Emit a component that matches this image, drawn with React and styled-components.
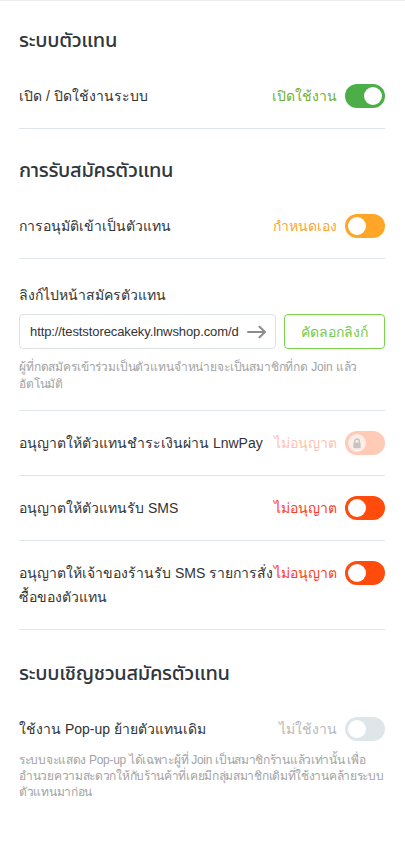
import React, { useState } from 'react';
import styled, { createGlobalStyle } from 'styled-components';

const Global = createGlobalStyle`
  html, body { margin: 0; padding: 0; background: #fff; }
  body {
    font-family: "Liberation Sans", "Noto Sans", Tahoma, sans-serif;
    color: #333;
  }
  * { box-sizing: border-box; }
`

const Page = styled.div`
  border-top: 1px solid #e8ecee;
  padding: 0 20px 40px 19px;
  width: 405px;
`

const Section = styled.section`
  padding-top: ${p => p.$pt || '28px'};
`

const Heading = styled.h2`
  margin: 0 0 9px;
  font-family: "Noto Sans Thai", "Liberation Sans", sans-serif;
  font-size: 20px;
  line-height: 28px;
  font-weight: 500;
  color: #30373c;
  letter-spacing: -0.3px;
`

const Row = styled.div`
  display: flex;
  align-items: flex-start;
  padding: 20px 0;
  border-bottom: 1px solid #dfe6e9;
`

const Label = styled.div`
  flex: 1;
  font-size: 14px;
  line-height: 24px;
  color: #333;
`

const Status = styled.span`
  font-size: 14px;
  line-height: 24px;
  color: ${p => p.$color};
  margin-right: 8px;
  white-space: nowrap;
`

const Track = styled.button`
  width: 40px;
  height: 24px;
  flex: 0 0 40px;
  border: none;
  border-radius: 12px;
  padding: 3px;
  background: ${p => p.$color};
  display: flex;
  justify-content: ${p => p.$on ? 'flex-end' : 'flex-start'};
  align-items: center;
  cursor: ${p => p.$locked ? 'not-allowed' : 'pointer'};
`

const Knob = styled.span`
  width: 18px;
  height: 18px;
  border-radius: 50%;
  background: ${p => p.$locked ? '#fbeee9' : '#fff'};
  display: flex;
  align-items: center;
  justify-content: center;
`

const Block = styled.div`
  padding: 24px 0 17px;
  border-bottom: 1px solid #dfe6e9;
`

const BlockLabel = styled.div`
  font-size: 14px;
  line-height: 24px;
  color: #333;
  margin-bottom: 7px;
`

const LinkRow = styled.div`
  display: flex;
  gap: 8px;
`

const LinkBox = styled.div`
  flex: 1;
  height: 35px;
  border: 1px solid #dde2e5;
  border-radius: 4px;
  display: flex;
  align-items: center;
  padding: 0 8px 0 10px;
  gap: 5px;
  overflow: hidden;
`

const LinkText = styled.span`
  flex: 1;
  font-family: "Liberation Sans", Arial, sans-serif;
  font-size: 13px;
  letter-spacing: -0.1px;
  color: #333;
  white-space: nowrap;
  overflow: hidden;
`

const CopyButton = styled.button`
  width: 101px;
  height: 35px;
  border: 1px solid #7ad54c;
  border-radius: 4px;
  background: #fff;
  color: #78c84a;
  font-family: inherit;
  font-size: 14px;
`

const Hint = styled.p`
  margin: ${p => p.$top || '10px'} 0 0;
  font-size: 12px;
  line-height: ${p => p.$lh || '17px'};
  letter-spacing: ${p => p.$ls || '-0.15px'};
  color: #a3a3a3;
`

const Stack = styled.div`
  padding: 20px 0;
`

const Inline = styled.div`
  display: flex;
  align-items: flex-start;
`

const LockIcon = () => (
  <svg width="10" height="11" viewBox="0 0 10 11">
    <path d="M2.6 4.8V3.4a2.4 2.4 0 0 1 4.8 0v1.4" fill="none" stroke="#c9c2bf" strokeWidth="1.4" />
    <rect x="1.4" y="4.6" width="7.2" height="5.6" rx="1" fill="#c9c2bf" />
  </svg>
)

const Toggle = ({ on, color, locked, onClick }) => (
  <Track $on={on} $color={color} $locked={locked} onClick={locked ? undefined : onClick}>
    <Knob $locked={locked}>{locked && <LockIcon />}</Knob>
  </Track>
)

const Arrow = () => (
  <svg width="20" height="14" viewBox="0 0 20 14">
    <path d="M1 7h17M12.5 1.8L18 7l-5.5 5.2" fill="none" stroke="#8c8c8c" strokeWidth="2" strokeLinecap="round" strokeLinejoin="round" />
  </svg>
)

export default function App() {
  const [system, setSystem] = useState(true)
  const [approve, setApprove] = useState(false)
  const [sms, setSms] = useState(false)
  const [ownerSms, setOwnerSms] = useState(false)
  const [popup, setPopup] = useState(false)

  return (
    <Page>
      <Global />
      <Section $pt="26px">
        <Heading>ระบบตัวแทน</Heading>
        <Row>
          <Label>เปิด / ปิดใช้งานระบบ</Label>
          <Status $color="#70b035">เปิดใช้งาน</Status>
          <Toggle on={system} color="#4cae46" onClick={() => setSystem(!system)} />
        </Row>
      </Section>

      <Section>
        <Heading>การรับสมัครตัวแทน</Heading>
        <Row>
          <Label>การอนุมัติเข้าเป็นตัวแทน</Label>
          <Status $color="#ffa330">กำหนดเอง</Status>
          <Toggle on={approve} color="#ffa629" onClick={() => setApprove(!approve)} />
        </Row>
        <Block>
          <BlockLabel>ลิงก์ไปหน้าสมัครตัวแทน</BlockLabel>
          <LinkRow>
            <LinkBox>
              <LinkText>http://teststorecakeky.lnwshop.com/d</LinkText>
              <Arrow />
            </LinkBox>
            <CopyButton>คัดลอกลิงก์</CopyButton>
          </LinkRow>
          <Hint>ผู้ที่กดสมัครเข้าร่วมเป็นตัวแทนจำหน่ายจะเป็นสมาชิกที่กด Join แล้ว อัตโนมัติ</Hint>
        </Block>
        <Row>
          <Label>อนุญาตให้ตัวแทนชำระเงินผ่าน LnwPay</Label>
          <Status $color="#ffc3ad">ไม่อนุญาต</Status>
          <Toggle on={false} locked color="#ffcab6" />
        </Row>
        <Row>
          <Label>อนุญาตให้ตัวแทนรับ SMS</Label>
          <Status $color="#ff3b22">ไม่อนุญาต</Status>
          <Toggle on={sms} color="#ff4b0c" onClick={() => setSms(!sms)} />
        </Row>
        <Row>
          <Label>อนุญาตให้เจ้าของร้านรับ SMS รายการสั่งซื้อของตัวแทน</Label>
          <Status $color="#ff3b22">ไม่อนุญาต</Status>
          <Toggle on={ownerSms} color="#ff4b0c" onClick={() => setOwnerSms(!ownerSms)} />
        </Row>
      </Section>

      <Section $pt="30px">
        <Heading>ระบบเชิญชวนสมัครตัวแทน</Heading>
        <Stack>
          <Inline>
            <Label>ใช้งาน Pop-up ย้ายตัวแทนเดิม</Label>
            <Status $color="#b8b8b8">ไม่ใช้งาน</Status>
            <Toggle on={popup} color="#dfe6e9" onClick={() => setPopup(!popup)} />
          </Inline>
          <Hint $top="11px" $lh="16px" $ls="-0.3px">ระบบจะแสดง Pop-up ได้เฉพาะผู้ที่ Join เป็นสมาชิกร้านแล้วเท่านั้น เพื่ออำนวยความสะดวกให้กับร้านค้าที่เคยมีกลุ่มสมาชิกเดิมที่ใช้งานคล้ายระบบตัวแทนมาก่อน</Hint>
        </Stack>
      </Section>
    </Page>
  )
}
